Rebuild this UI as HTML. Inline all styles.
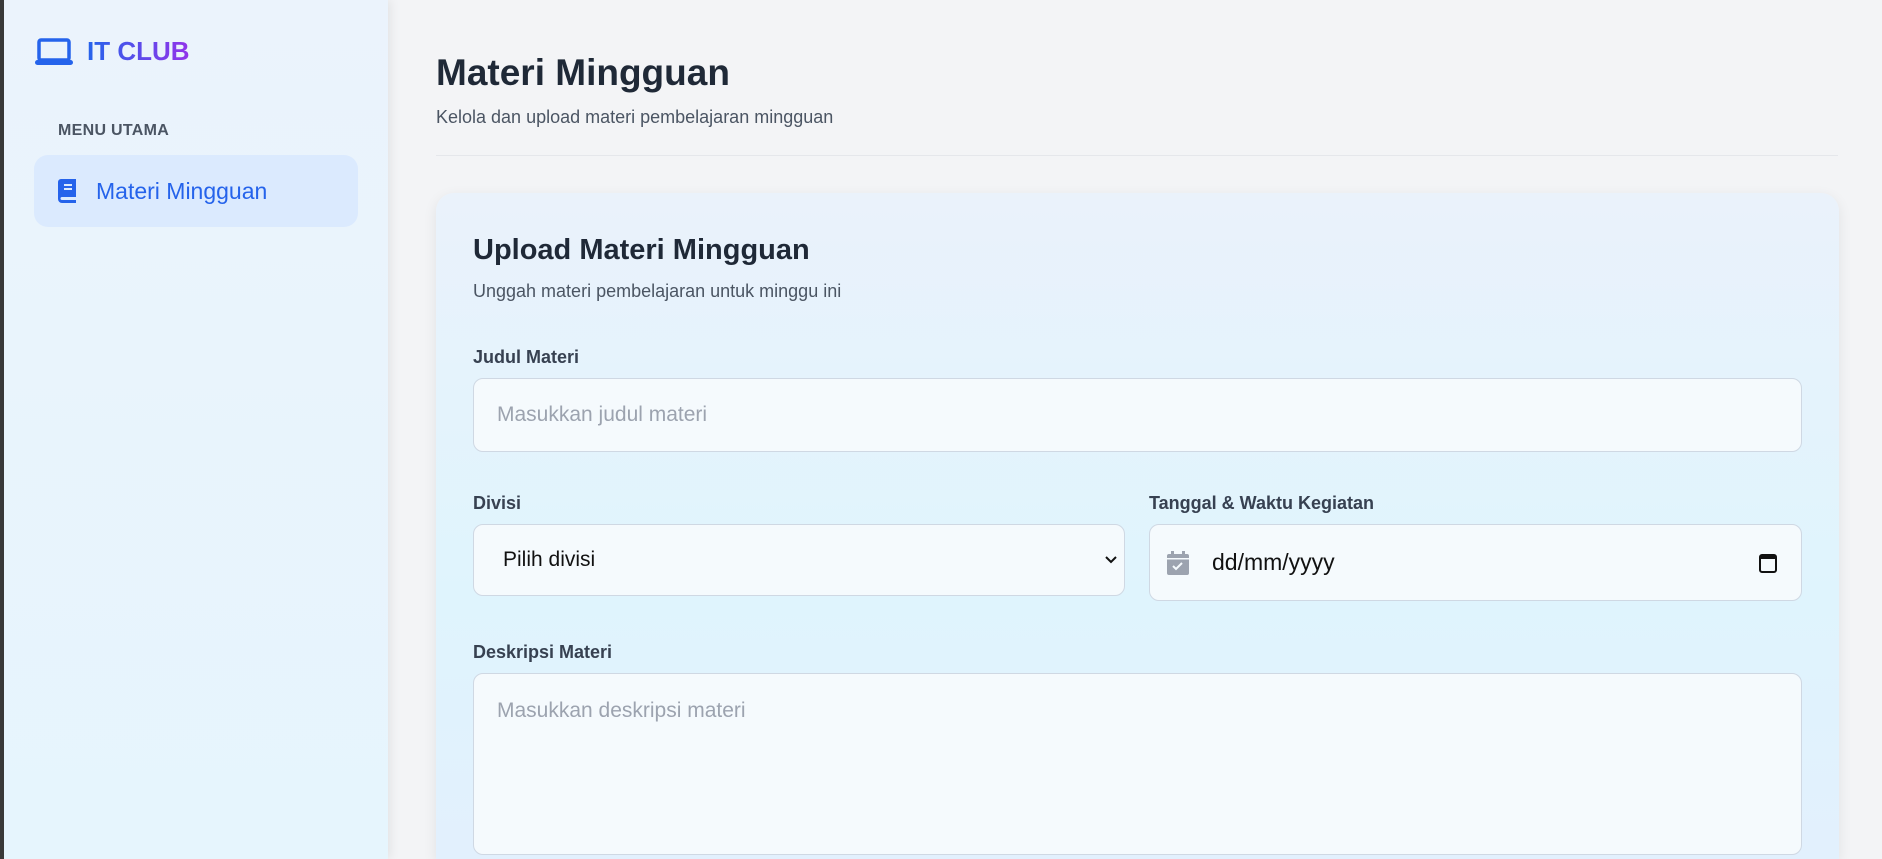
<!DOCTYPE html>
<html style="overflow:hidden;height:859px"><head><meta charset="utf-8"><style>
*{box-sizing:border-box;margin:0;padding:0}
body{width:1882px;height:859px;overflow:hidden;background:#f3f4f6;font-family:"Liberation Sans",sans-serif;position:relative}
.lb{position:absolute;left:0;top:0;width:4px;height:859px;background:#3a3a3a}
.side{position:absolute;left:4px;top:0;width:384px;height:859px;background:linear-gradient(180deg,#ebf3fc,#e6f5fd);box-shadow:2px 0 10px rgba(0,0,0,.08)}
.logo{position:absolute;left:35px;top:36px;display:flex;align-items:center;gap:14px}
.logo span{font-size:26px;font-weight:bold;background:linear-gradient(90deg,#2563eb,#9333ea);-webkit-background-clip:text;color:transparent}
.menu{position:absolute;left:58px;top:122px;font-size:16px;font-weight:bold;color:#4b5563;letter-spacing:.3px}
.nav{position:absolute;left:34px;top:155px;width:324px;height:72px;border-radius:14px;background:#dbeafe;display:flex;align-items:center;padding-left:24px;gap:18px;color:#2563eb;font-size:23px}
h1{position:absolute;left:436px;top:52px;font-size:37px;color:#1f2937}
.sub{position:absolute;left:436px;top:107px;font-size:18px;color:#4b5563}
.hr{position:absolute;left:436px;top:155px;width:1402px;height:1px;background:#e5e7eb}
.card{position:absolute;left:436px;top:193px;width:1403px;height:666px;border-radius:18px 18px 0 0;background:linear-gradient(180deg,#eaf2fb,#dff4fd 60%,#e2f0fd);box-shadow:0 4px 14px rgba(0,0,0,.08)}
.t{position:absolute;font-family:"Liberation Sans",sans-serif}
h2{position:absolute;left:473px;top:234px;font-size:29px;color:#1f2937}
.cs{left:473px;top:281px;font-size:18px;color:#4b5563}
.lab{font-size:18px;font-weight:bold;color:#374151}
.inp{position:absolute;background:#f5fafd;border:1.5px solid #cfd8e3;border-radius:10px}
.ph{font-size:21px;color:#9ca3af}
</style></head><body>
<div class="lb"></div>
<div class="side"></div>
<div class="logo"><svg width="38" height="28" viewBox="0 0 38 28"><rect x="4" y="2" width="30" height="20" rx="2" fill="none" stroke="#2563eb" stroke-width="3.5"/><rect x="0" y="22" width="38" height="5" rx="2.5" fill="#2563eb"/></svg><span>IT CLUB</span></div>
<div class="menu">MENU UTAMA</div>
<div class="nav"><svg width="20" height="24" viewBox="0 0 20 24"><path d="M3 0h15v18H4a1.5 1.5 0 0 0 0 3h14v3H4a4 4 0 0 1-4-4V3a3 3 0 0 1 3-3z" fill="#2563eb"/><rect x="6" y="5" width="8" height="2" fill="#dbeafe"/><rect x="6" y="9" width="8" height="2" fill="#dbeafe"/></svg>Materi Mingguan</div>
<h1>Materi Mingguan</h1>
<div class="sub">Kelola dan upload materi pembelajaran mingguan</div>
<div class="hr"></div>
<div class="card"></div>
<h2>Upload Materi Mingguan</h2>
<div class="t cs">Unggah materi pembelajaran untuk minggu ini</div>
<div class="t lab" style="left:473px;top:347px">Judul Materi</div>
<div class="inp" style="left:473px;top:378px;width:1329px;height:74px"><div class="t ph" style="left:23px;top:24px">Masukkan judul materi</div></div>
<div class="t lab" style="left:473px;top:493px">Divisi</div>
<div class="inp" style="left:473px;top:524px;width:652px;height:72px"><div class="t" style="left:29px;top:23px;font-size:21px;color:#111">Pilih divisi</div><svg style="position:absolute;right:6px;top:30px" width="14" height="10" viewBox="0 0 14 10"><path d="M2 2l5 5 5-5" fill="none" stroke="#111" stroke-width="2"/></svg></div>
<div class="t lab" style="left:1149px;top:493px">Tanggal &amp; Waktu Kegiatan</div>
<div class="inp" style="left:1149px;top:524px;width:653px;height:77px"><svg style="position:absolute;left:17px;top:26px" width="22" height="24" viewBox="0 0 22 24"><rect x="0" y="3" width="22" height="21" rx="2" fill="#9ca3af"/><rect x="4" y="0" width="3" height="5" fill="#9ca3af"/><rect x="15" y="0" width="3" height="5" fill="#9ca3af"/><rect x="0" y="7" width="22" height="1.5" fill="#f5fafd"/><path d="M6 15l3 3 6-6" fill="none" stroke="#f5fafd" stroke-width="2"/></svg><div class="t" style="left:62px;top:24px;font-size:23px;color:#111">dd/mm/yyyy</div><svg style="position:absolute;right:23px;top:27px" width="20" height="22" viewBox="0 0 20 22"><rect x="2" y="3" width="16" height="17" rx="2" fill="none" stroke="#111" stroke-width="2"/><rect x="2" y="3" width="16" height="4" fill="#111"/></svg></div>
<div class="t lab" style="left:473px;top:642px">Deskripsi Materi</div>
<div class="inp" style="left:473px;top:673px;width:1329px;height:182px"><div class="t ph" style="left:23px;top:25px">Masukkan deskripsi materi</div></div>
</body></html>
